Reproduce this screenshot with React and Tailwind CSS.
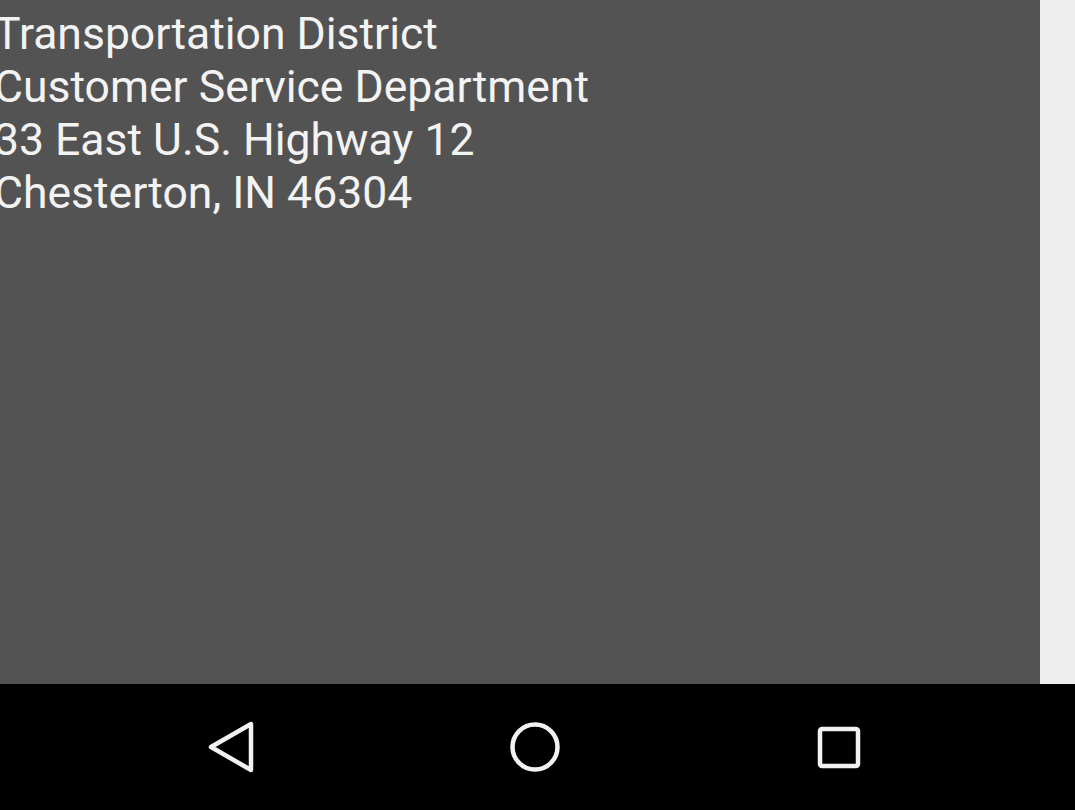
import React from "react";

const lines = [
  "Northern Indiana Commuter",
  "Transportation District",
  "Customer Service Department",
  "33 East U.S. Highway 12",
  "Chesterton, IN 46304",
];

function NavButton({ children }) {
  return (
    <div className="w-[304px] h-full flex items-center justify-center">
      <svg width="60" height="60" viewBox="-30 -30 60 60" fill="none" stroke="#f2f2f2" strokeWidth="4.5" strokeLinejoin="round" strokeLinecap="round">
        {children}
      </svg>
    </div>
  );
}

export default function App() {
  return (
    <div className="w-[1075px] h-[810px] flex flex-col overflow-hidden bg-black font-['Roboto',sans-serif]">
      <div className="flex h-[684px] shrink-0">
        <div className="w-[1040px] bg-[#535353] overflow-hidden">
          <div className="-mt-[45px] -ml-[6px] text-[44.5px] leading-[53px] text-[#f3f3f3]">
            {lines.map((l) => (
              <div key={l} className="whitespace-nowrap">{l}</div>
            ))}
          </div>
        </div>
        <div className="flex-1 bg-[#eeeeee]" />
      </div>
      <div className="flex-1 flex justify-center items-center pr-[5px]">
        <NavButton>
          <path d="M-20 0 L20 -23 L20 23 Z" />
        </NavButton>
        <NavButton>
          <circle cx="0" cy="0" r="22.5" />
        </NavButton>
        <NavButton>
          <rect x="-19" y="-18" width="38" height="37" rx="2" />
        </NavButton>
      </div>
    </div>
  );
}
